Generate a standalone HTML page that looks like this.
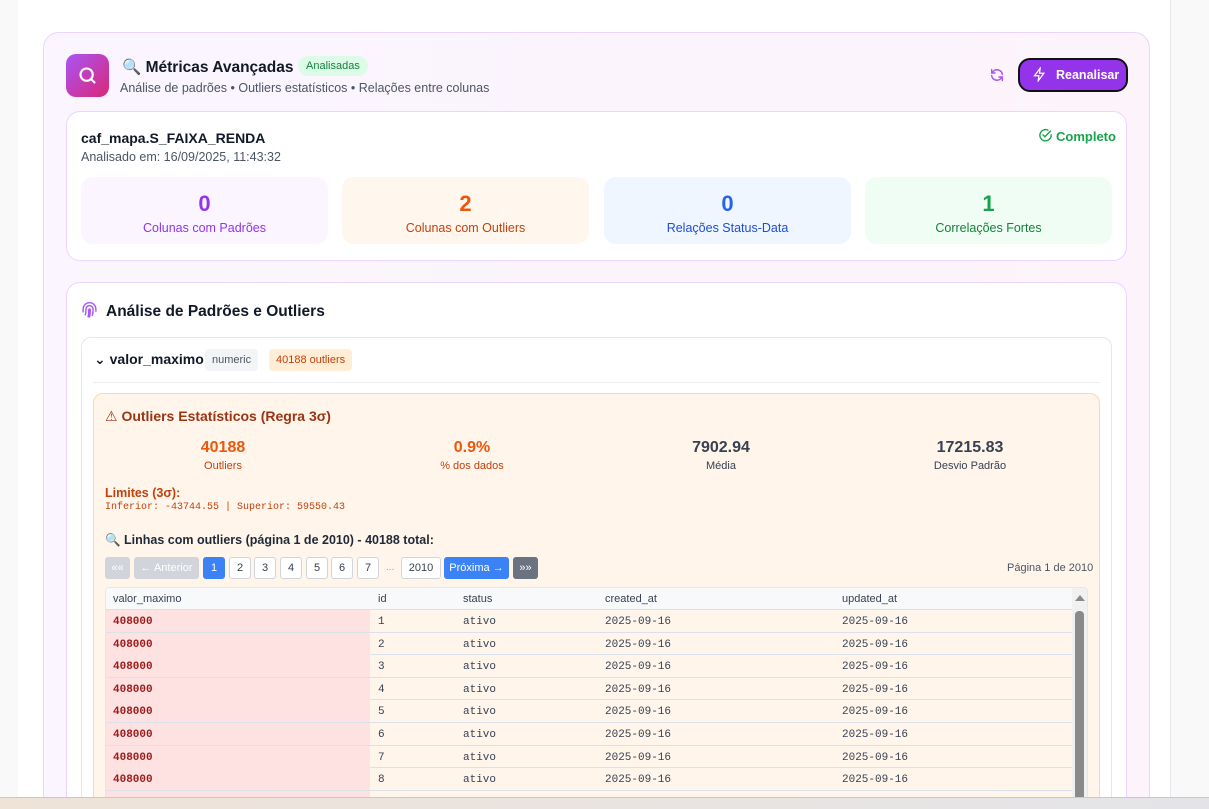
<!DOCTYPE html>
<html><head><meta charset="utf-8"><style>
*{box-sizing:border-box;margin:0;padding:0}
html,body{width:1209px;height:809px;overflow:hidden}
body{background:#f9f9fa;font-family:"Liberation Sans","DejaVu Sans",sans-serif;position:relative;color:#111827}
.a{position:absolute}
.mono{font-family:"Liberation Mono","DejaVu Sans Mono",monospace}
.stat{position:absolute;top:177px;width:247px;height:67px;border-radius:12px;text-align:center}
.stat b{display:block;font-size:22px;margin-top:14px}
.stat span{display:block;font-size:12.5px;margin-top:4px}
.pb{position:absolute;top:557px;height:22px;border:1px solid #d1d5db;border-radius:3px;background:#fff;font-size:11px;color:#374151;text-align:center;line-height:20px}
.row{position:absolute;left:106px;width:966px;height:22.6px;border-bottom:1px solid #dbe1ea;font-size:11px;color:#374151;background:#fff5eb}
.row div{position:absolute;top:6px}
</style></head><body>
<div class="a" style="left:18px;top:0;width:1153px;height:797px;background:#fff;border-right:1px solid #e5e7eb"></div>
<div class="a" style="left:43px;top:32px;width:1107px;height:790px;border:1px solid #e9d5ff;border-radius:16px;background:linear-gradient(90deg,#faf5ff,#fdf4fb)"></div>
<div class="a" style="left:66px;top:54px;width:43px;height:43px;border-radius:10px;background:linear-gradient(135deg,#a855f7,#db2777)"></div>
<svg class="a" style="left:77px;top:65px" width="21" height="21" viewBox="0 0 24 24" fill="none" stroke="#fff" stroke-width="2.4" stroke-linecap="round"><circle cx="11" cy="11" r="7"/><path d="M20 20l-4-4"/></svg>
<div class="a" style="left:122px;top:58px;font-size:15.5px;font-weight:bold">🔍 Métricas Avançadas</div>
<div class="a" style="left:298px;top:56px;height:20px;padding:0 8px;border-radius:10px;background:#dcfce7;color:#15803d;font-size:11px;line-height:20px">Analisadas</div>
<div class="a" style="left:120px;top:81px;font-size:12.5px;color:#4b5563">Análise de padrões • Outliers estatísticos • Relações entre colunas</div>
<svg class="a" style="left:989px;top:67px" width="16" height="16" viewBox="0 0 24 24" fill="none" stroke="#a855f7" stroke-width="2.2" stroke-linecap="round"><path d="M20 11a8 8 0 0 0-14-4l-2 2M4 4v5h5M4 13a8 8 0 0 0 14 4l2-2M20 20v-5h-5"/></svg>
<div class="a" style="left:1018px;top:58px;width:110px;height:34px;border:2px solid #111;border-radius:12px;background:#9333ea;color:#fff;font-size:12.5px;font-weight:bold;line-height:30px;padding-left:36px">Reanalisar</div>
<svg class="a" style="left:1032px;top:67px" width="15" height="15" viewBox="0 0 24 24" fill="none" stroke="#fff" stroke-width="2"><path d="M13 2L4 14h7l-1 8 9-12h-7z"/></svg>

<div class="a" style="left:66px;top:111px;width:1061px;height:150px;border:1px solid #e9d5ff;border-radius:14px;background:#fff"></div>
<div class="a" style="left:81px;top:130px;font-size:14px;font-weight:bold">caf_mapa.S_FAIXA_RENDA</div>
<div class="a" style="left:81px;top:150px;font-size:12.5px;color:#4b5563">Analisado em: 16/09/2025, 11:43:32</div>
<svg class="a" style="left:1038px;top:128px" width="15" height="15" viewBox="0 0 24 24" fill="none" stroke="#16a34a" stroke-width="2.2" stroke-linecap="round"><path d="M21 11a9 9 0 1 1-5-7.5"/><path d="M8 11l3 3 9-9"/></svg>
<div class="a" style="left:1056px;top:129px;font-size:13px;font-weight:bold;color:#16a34a">Completo</div>
<div class="stat" style="left:81px;background:#faf5ff"><b style="color:#9333ea">0</b><span style="color:#9333ea">Colunas com Padrões</span></div>
<div class="stat" style="left:342px;background:#fff7ed"><b style="color:#ea580c">2</b><span style="color:#c2410c">Colunas com Outliers</span></div>
<div class="stat" style="left:604px;background:#eff6ff"><b style="color:#2563eb">0</b><span style="color:#1d4ed8">Relações Status-Data</span></div>
<div class="stat" style="left:865px;background:#f0fdf4"><b style="color:#16a34a">1</b><span style="color:#15803d">Correlações Fortes</span></div>

<div class="a" style="left:66px;top:282px;width:1061px;height:560px;border:1px solid #e9d5ff;border-radius:14px;background:#fff"></div>
<svg class="a" style="left:81px;top:302px" width="17" height="17" viewBox="0 0 24 24" fill="none" stroke="#a855f7" stroke-width="2" stroke-linecap="round"><path d="M6 18c1-2 1-5 1-8a5 5 0 0 1 10 0c0 3 0 6-1 9M10 21c1-3 1-7 1-10a1 1 0 0 1 2 0c0 4 0 7-1 10M3 14c0-2 0-3 0-4a9 9 0 0 1 18 0v3"/></svg>
<div class="a" style="left:106px;top:303px;font-size:15.5px;font-weight:bold;color:#111827">Análise de Padrões e Outliers</div>
<div class="a" style="left:81px;top:337px;width:1031px;height:500px;border:1px solid #e5e7eb;border-radius:10px;background:#fff"></div>
<div class="a" style="left:94px;top:351px;font-size:14px;font-weight:bold">⌄ valor_maximo</div>
<div class="a" style="left:205px;top:349px;height:22px;padding:0 7px;background:#f3f4f6;border-radius:4px;font-size:11px;color:#4b5563;line-height:22px">numeric</div>
<div class="a" style="left:269px;top:349px;height:22px;padding:0 7px;background:#ffedd5;border-radius:4px;font-size:11px;color:#c2410c;line-height:22px">40188 outliers</div>
<div class="a" style="left:93px;top:382px;width:1007px;height:1px;background:#eceef1"></div>
<div class="a" style="left:93px;top:393px;width:1007px;height:440px;border:1px solid #fed7aa;border-radius:10px;background:#fff5eb"></div>
<div class="a" style="left:105px;top:408px;font-size:14px;font-weight:bold;color:#9a3412">⚠ Outliers Estatísticos (Regra 3σ)</div>
<div class="a" style="left:105px;top:439px;width:236px;text-align:center;font-size:16px;font-weight:bold;color:#ea580c">40188<div style="font-size:11px;font-weight:normal;color:#c2410c;margin-top:3px">Outliers</div></div>
<div class="a" style="left:354px;top:439px;width:236px;text-align:center;font-size:16px;font-weight:bold;color:#ea580c">0.9%<div style="font-size:11px;font-weight:normal;color:#c2410c;margin-top:3px">% dos dados</div></div>
<div class="a" style="left:603px;top:439px;width:236px;text-align:center;font-size:16px;font-weight:bold;color:#374151">7902.94<div style="font-size:11px;font-weight:normal;color:#374151;margin-top:3px">Média</div></div>
<div class="a" style="left:852px;top:439px;width:236px;text-align:center;font-size:16px;font-weight:bold;color:#374151">17215.83<div style="font-size:11px;font-weight:normal;color:#374151;margin-top:3px">Desvio Padrão</div></div>
<div class="a" style="left:105px;top:486px;font-size:12.5px;font-weight:bold;color:#c2410c">Limites (3σ):</div>
<div class="a mono" style="left:105px;top:502px;font-size:10px;color:#c2410c">Inferior: -43744.55 | Superior: 59550.43</div>
<div class="a" style="left:105px;top:533px;font-size:12.5px;font-weight:bold;color:#1f2937">🔍 Linhas com outliers (página 1 de 2010) - 40188 total:</div>
<div class="pb" style="left:105px;width:25px;background:#d1d5db;color:#fff;border-color:#d1d5db">««</div>
<div class="pb" style="left:134px;width:65px;background:#d1d5db;color:#fff;border-color:#d1d5db">← Anterior</div>
<div class="pb" style="left:203px;width:22px;background:#3b82f6;color:#fff;border-color:#3b82f6">1</div>
<div class="pb" style="left:229px;width:22px">2</div>
<div class="pb" style="left:254px;width:22px">3</div>
<div class="pb" style="left:280px;width:22px">4</div>
<div class="pb" style="left:306px;width:22px">5</div>
<div class="pb" style="left:331px;width:22px">6</div>
<div class="pb" style="left:357px;width:22px">7</div>
<div class="a" style="left:386px;top:562px;font-size:10px;color:#9ca3af">...</div>
<div class="pb" style="left:401px;width:40px">2010</div>
<div class="pb" style="left:444px;width:65px;background:#3b82f6;color:#fff;border-color:#3b82f6">Próxima →</div>
<div class="pb" style="left:513px;width:25px;background:#6b7280;color:#fff;border-color:#6b7280">»»</div>
<div class="a" style="left:1007px;top:562px;font-size:11px;color:#4b5563">Página 1 de 2010</div>
<div class="a" style="left:105px;top:587px;width:983px;height:215px;border:1px solid #e5e7eb;border-radius:4px;background:#f9fafb;overflow:hidden">
<div class="a" style="left:0;top:0;width:966px;height:22px;border-bottom:1px solid #dbe1ea;background:#f8f9fb;font-size:11px;color:#374151">
<div class="a" style="left:7px;top:5px">valor_maximo</div><div class="a" style="left:272px;top:5px">id</div><div class="a" style="left:357px;top:5px">status</div><div class="a" style="left:499px;top:5px">created_at</div><div class="a" style="left:736px;top:5px">updated_at</div></div>
<div class="a" style="left:966px;top:0;width:16px;height:215px;background:#f1f1f1"></div>
<div class="a" style="left:969px;top:7px;width:0;height:0;border-left:5px solid transparent;border-right:5px solid transparent;border-bottom:6px solid #8a8a8a"></div>
<div class="a" style="left:969px;top:23px;width:9px;height:200px;border-radius:4px;background:#8a8a8a"></div>
<div id="rows"></div>
</div>
<script>
var h='';for(var i=0;i<9;i++){var t=22+i*22.6;h+='<div class="row mono" style="left:0;top:'+t+'px"><div style="left:0;top:0;width:264px;height:22px;background:#fee2e2"></div><div style="left:7px;color:#991b1b;font-weight:bold">408000</div><div style="left:272px">'+(i+1)+'</div><div style="left:357px">ativo</div><div style="left:499px">2025-09-16</div><div style="left:736px">2025-09-16</div></div>';}
document.getElementById('rows').innerHTML=h;
</script>
<div class="a" style="left:0;top:797px;width:1209px;height:12px;background:linear-gradient(90deg,#efe3d8,#e4e4e8);border-top:1px solid #c8c8c8"></div>
</body></html>
